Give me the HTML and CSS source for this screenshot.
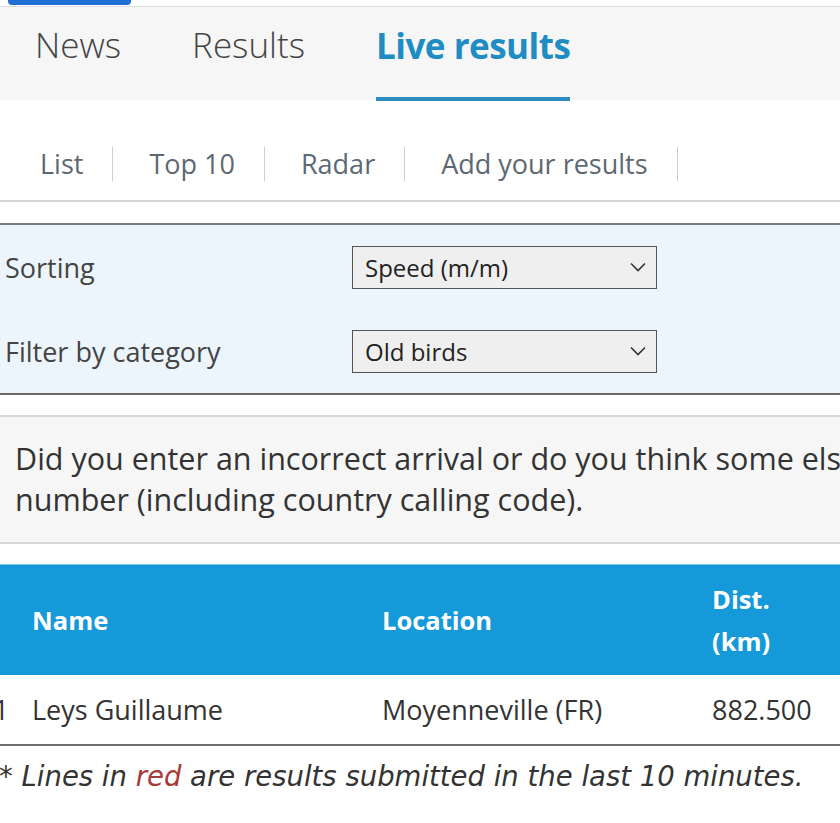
FILE: index.html
```html
<!DOCTYPE html>
<html lang="en">
<head>
<meta charset="utf-8">
<title>Live results</title>
<link rel="stylesheet" href="styles.css">
</head>
<body>
<div class="page">
  <div class="topline"><span class="topline-ind"></span></div>
  <nav class="tabs">
    <a class="tab">News</a>
    <a class="tab">Results</a>
    <a class="tab tab-active">Live results</a>
  </nav>
  <nav class="subnav">
    <a class="subnav-item">List</a>
    <a class="subnav-item">Top 10</a>
    <a class="subnav-item">Radar</a>
    <a class="subnav-item">Add your results</a>
  </nav>
  <section class="filters">
    <div class="filter-row">
      <span class="filter-label">Sorting</span>
      <div class="select"><span>Speed (m/m)</span>
        <svg class="chev" width="16" height="10" viewBox="0 0 16 10"><path d="M1 1.5 L8 8.5 L15 1.5" fill="none" stroke="#333" stroke-width="1.6"/></svg>
      </div>
    </div>
    <div class="filter-row">
      <span class="filter-label">Filter by category</span>
      <div class="select"><span>Old birds</span>
        <svg class="chev" width="16" height="10" viewBox="0 0 16 10"><path d="M1 1.5 L8 8.5 L15 1.5" fill="none" stroke="#333" stroke-width="1.6"/></svg>
      </div>
    </div>
  </section>
  <section class="notice">
    <span class="notice-line">Did you enter an incorrect arrival or do you think some else has entered your pigeon? Send us your phone</span>
    <span class="notice-line">number (including country calling code).</span>
  </section>
  <table class="results">
    <colgroup>
      <col class="c-rank"><col class="c-name"><col class="c-loc"><col class="c-dist">
    </colgroup>
    <thead>
      <tr><th></th><th>Name</th><th>Location</th><th>Dist.<br>(km)</th></tr>
    </thead>
    <tbody>
      <tr><td class="rank">1</td><td>Leys Guillaume</td><td>Moyenneville (FR)</td><td>882.500</td></tr>
    </tbody>
  </table>
  <p class="legend">* Lines in <span class="red">red</span> are results submitted in the last 10 minutes.</p>
</div>
</body>
</html>
```
FILE: styles.css
```css
html, body {
  margin: 0;
  padding: 0;
  background: #fff;
}
body {
  width: 840px;
  height: 823px;
  overflow: hidden;
  font-family: "Open Sans", "Noto Sans", sans-serif;
  color: #333;
}
.page {
  display: flex;
  flex-direction: column;
}
.topline {
  height: 6px;
  border-bottom: 1px solid #dcdcdc;
  padding-left: 8px;
  background: #fff;
}
.topline-ind {
  display: block;
  width: 123px;
  height: 5px;
  background: #1f6fd4;
  border-radius: 0 0 4px 4px;
}
.tabs {
  display: flex;
  height: 93px;
  background: #f6f6f6;
  padding-left: 35px;
  gap: 71px;
}
.tab {
  display: flex;
  align-items: center;
  padding-bottom: 14px;
  font-size: 35px;
  font-weight: 300;
  color: #444;
  box-sizing: border-box;
  border-bottom: 4px solid transparent;
}
.tab-active {
  font-weight: 700;
  letter-spacing: -0.5px;
  color: #1f8cc4;
  border-bottom-color: #2b8dc0;
  margin-bottom: -1px;
}
.subnav {
  display: flex;
  align-items: center;
  height: 101px;
  padding-left: 40px;
  padding-top: 26px;
  border-bottom: 2px solid #d6d6d6;
  box-sizing: border-box;
  margin-top: 1px;
}
.subnav-item {
  font-size: 27px;
  font-weight: 400;
  color: #5d6873;
  padding-right: 29px;
  margin-right: 36px;
  border-right: 1px solid #cfcfcf;
  line-height: 34px;
}
.filters {
  margin-top: 21px;
  border-top: 2px solid #7a7a7a;
  border-bottom: 2px solid #6a6a6a;
  background: #edf5fc;
  padding: 0 0 0 5px;
}
.filter-row {
  display: grid;
  grid-template-columns: 347px 305px;
  align-items: center;
  height: 84px;
}
.filter-label {
  font-size: 27px;
  color: #444;
}
.select {
  display: flex;
  align-items: center;
  justify-content: space-between;
  height: 43px;
  box-sizing: border-box;
  border: 1.5px solid #555;
  background: #efefef;
  padding: 0 10px 0 12px;
  font-size: 24px;
  color: #222;
}
.chev {
  display: block;
}
.notice {
  margin-top: 20px;
  border-top: 2px solid #d8d8d8;
  border-bottom: 2px solid #d6d6d6;
  background: #f6f6f6;
  padding: 21px 0 22px 15px;
  display: flex;
  flex-direction: column;
}
.notice-line {
  display: block;
  white-space: nowrap;
  overflow: hidden;
  font-size: 30.5px;
  line-height: 41px;
  color: #333;
}
.results {
  margin-top: 20px;
  margin-left: -20px;
  border-collapse: collapse;
  table-layout: fixed;
  width: 860px;
}
.c-rank { width: 30px; }
.c-name { width: 350px; }
.c-loc { width: 330px; }
.c-dist { width: 150px; }
.results thead tr {
  background: #1599d9;
  border-top: 1px solid #7cc6ea;
  height: 110px;
}
.results th {
  text-align: left;
  color: #fff;
  font-weight: 700;
  font-size: 25.5px;
  line-height: 42px;
  padding: 0 0 0 22px;
}
.results tbody tr {
  height: 70px;
  border-bottom: 2px solid #707070;
}
.results td {
  font-size: 27px;
  color: #333;
  padding: 0 0 0 22px;
  white-space: nowrap;
}
.results td.rank {
  text-align: right;
  padding: 0 1px 0 0;
}
.legend {
  margin: 14px 0 0 -1px;
  font-family: "DejaVu Sans", sans-serif;
  font-size: 27.5px;
  font-style: italic;
  color: #333;
  white-space: nowrap;
}
.red {
  color: #a63a3a;
}
```
